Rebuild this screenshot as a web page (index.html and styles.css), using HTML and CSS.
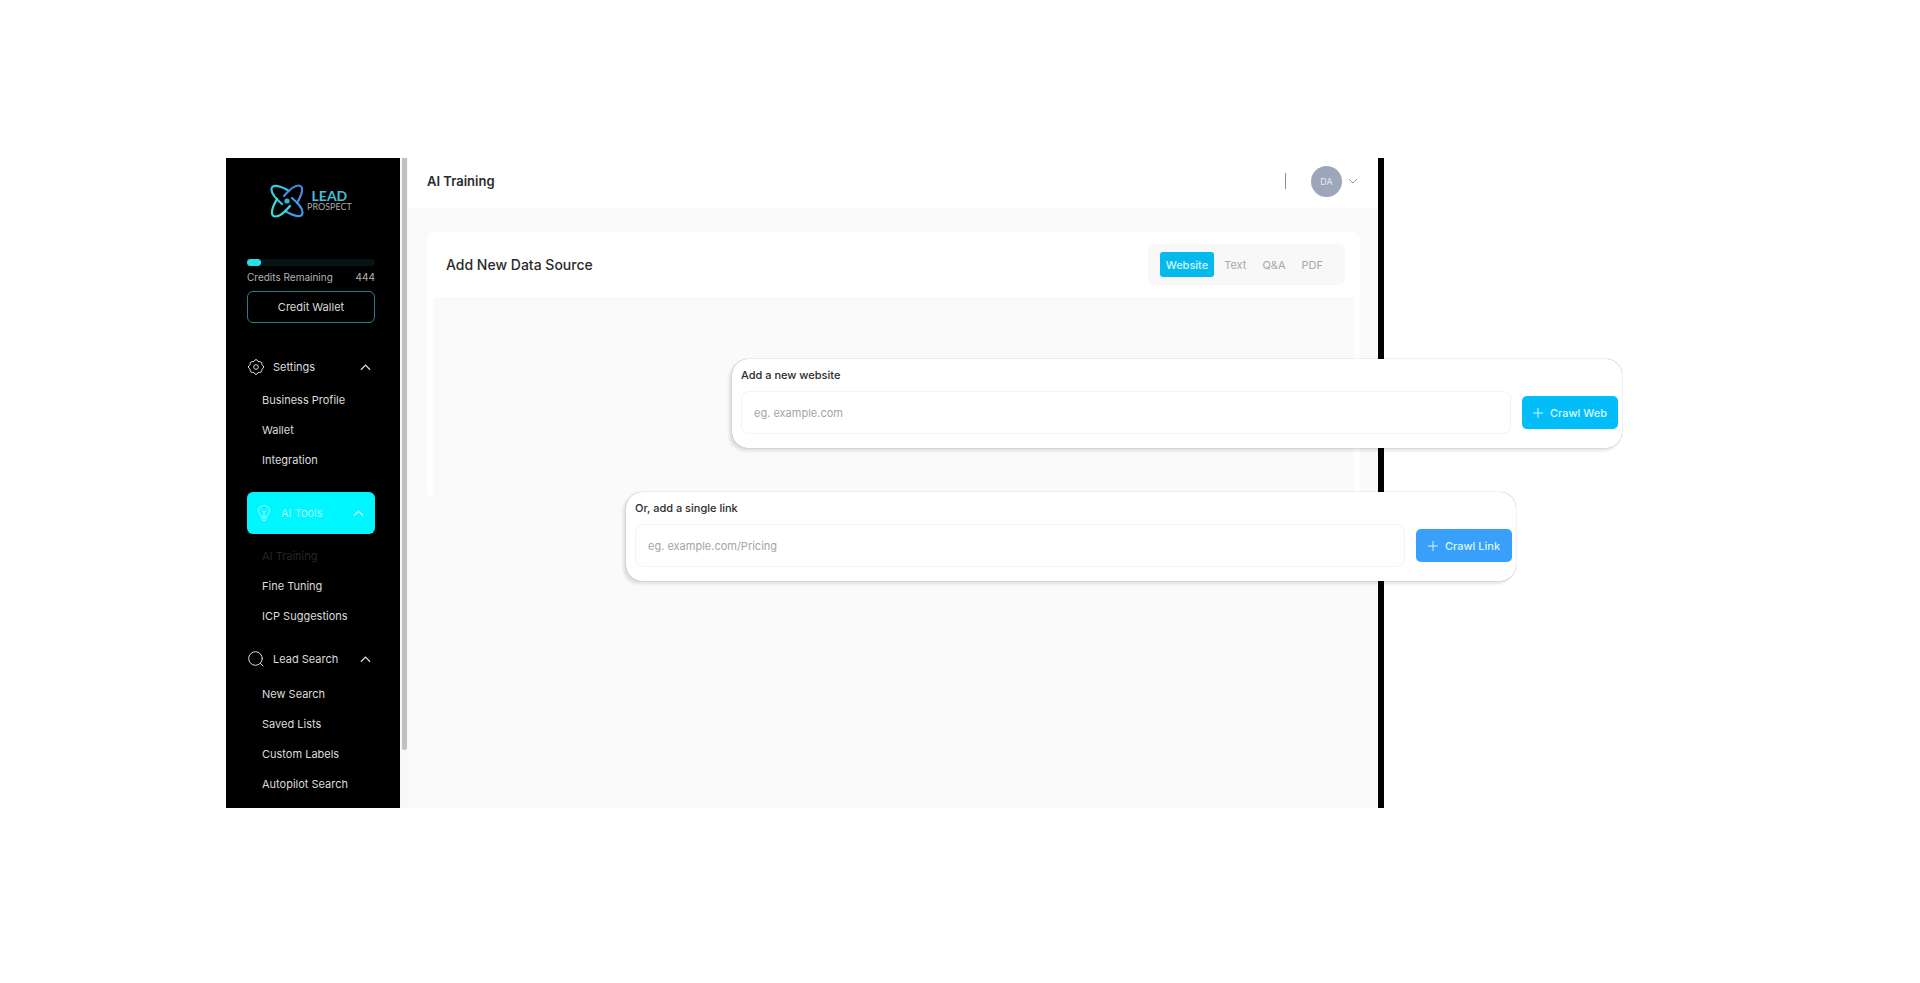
FILE: index.html
```html
<!DOCTYPE html>
<html lang="en">
<head>
    <meta charset="UTF-8">
    <meta name="viewport" content="width=device-width, initial-scale=1.0">
    <title>Lead Prospect - AI Training</title>
    <link rel="stylesheet" href="styles.css">
</head>
<body>
    <div class="app">
        <aside class="sidebar">
            <a class="logo" href="#">
                <svg class="logo-mark" viewBox="0 0 34 34" fill="none" stroke-width="2.2" stroke-linecap="round">
                    <path stroke="#35c8e4" d="M12 20C6 15 1.500 9 1.500 5.500 1.500 0.500 8 0.500 19 7"/>
                    <path stroke="#4a86e0" d="M12 20C6 15 1.500 9 1.500 5.500 1.500 0.500 8 0.500 19 7" transform="rotate(90 17 17)"/>
                    <path stroke="#3f9ce4" d="M12 20C6 15 1.500 9 1.500 5.500 1.500 0.500 8 0.500 19 7" transform="rotate(180 17 17)"/>
                    <path stroke="#35e0dc" d="M12 20C6 15 1.500 9 1.500 5.500 1.500 0.500 8 0.500 19 7" transform="rotate(270 17 17)"/>
                    <circle cx="17" cy="17" r="2.6" fill="#3cb0dc"/>
                </svg>
                <span class="logo-text">
                    <span class="logo-lead">LEAD</span>
                    <span class="logo-prospect">PROSPECT</span>
                </span>
            </a>

            <div class="credits">
                <div class="credits-bar"><div class="credits-fill"></div></div>
                <div class="credits-row"><span>Credits Remaining</span><span>444</span></div>
                <button class="wallet-button" type="button">Credit Wallet</button>
            </div>

            <nav class="menu">
                <button class="menu-header" type="button">
                    <svg class="menu-icon" viewBox="0 0 16 16" fill="none" stroke="currentColor" stroke-linejoin="round">
                        <path d="M6 2.500Q8-1.500 10 2.500 14.500 2.300 13.800 5.500 17.500 8 13.800 10.500 14.500 13.700 10 13.500 8 17.500 6 13.500 1.500 13.700 2.200 10.500-1.500 8 2.200 5.500 1.500 2.300 6 2.500z"/>
                        <circle cx="8" cy="8" r="2.300"/>
                    </svg>
                    <span>Settings</span>
                    <svg class="chevron" viewBox="0 0 12 8" fill="none" stroke="currentColor" stroke-width="1.4"><path d="M1 7l5-5 5 5"/></svg>
                </button>
                <ul class="menu-list">
                    <li><a href="#">Business Profile</a></li>
                    <li><a href="#">Wallet</a></li>
                    <li><a href="#">Integration</a></li>
                </ul>

                <button class="menu-header active" type="button">
                    <svg class="menu-icon" viewBox="0 0 16 16" fill="none" stroke="currentColor" stroke-linecap="round" stroke-linejoin="round">
                        <path d="M5.500 11.500C5.500 9.500 2.500 9 2.500 5.800a5.500 5.300 0 0 1 11 0c0 3.200-3 3.700-3 5.700zM5.800 13.700h4.400M6.800 15.500h2.400M8 11V7M5.800 5.300 8 7l2.200-1.700"/>
                    </svg>
                    <span>AI Tools</span>
                    <svg class="chevron" viewBox="0 0 12 8" fill="none" stroke="currentColor" stroke-width="1.8"><path d="M1 7l5-5 5 5"/></svg>
                </button>
                <ul class="menu-list">
                    <li><a class="current" href="#">AI Training</a></li>
                    <li><a href="#">Fine Tuning</a></li>
                    <li><a href="#">ICP Suggestions</a></li>
                </ul>

                <button class="menu-header" type="button">
                    <svg class="menu-icon" viewBox="0 0 16 16" fill="none" stroke="currentColor" stroke-linecap="round">
                        <circle cx="7.500" cy="7.500" r="6.800"/>
                        <path d="M12.500 12.500l2.500 2.500"/>
                    </svg>
                    <span>Lead Search</span>
                    <svg class="chevron" viewBox="0 0 12 8" fill="none" stroke="currentColor" stroke-width="1.4"><path d="M1 7l5-5 5 5"/></svg>
                </button>
                <ul class="menu-list">
                    <li><a href="#">New Search</a></li>
                    <li><a href="#">Saved Lists</a></li>
                    <li><a href="#">Custom Labels</a></li>
                    <li><a href="#">Autopilot Search</a></li>
                </ul>
            </nav>
        </aside>

        <div class="scroll-track"><div class="scroll-thumb"></div></div>

        <main class="main">
            <header class="topbar">
                <h1>AI Training</h1>
                <span class="divider"></span>
                <button class="account" type="button">
                    <span class="avatar">DA</span>
                    <svg class="account-chevron" viewBox="0 0 10 6" fill="none" stroke="currentColor"><path d="M1 1l4 4 4-4"/></svg>
                </button>
            </header>

            <section class="source-card">
                <div class="source-head">
                    <h2>Add New Data Source</h2>
                    <div class="tabs">
                        <button class="tab selected" type="button">Website</button>
                        <button class="tab" type="button">Text</button>
                        <button class="tab" type="button">Q&amp;A</button>
                        <button class="tab" type="button">PDF</button>
                    </div>
                </div>
                <div class="source-body"></div>
            </section>
        </main>

        <form class="crawl-card crawl-web">
            <label for="website">Add a new website</label>
            <div class="crawl-row">
                <input id="website" type="text" placeholder="eg. example.com">
                <button type="button">
                    <svg class="plus" viewBox="0 0 10 10" stroke="currentColor"><path d="M5 0v10M0 5h10"/></svg>
                    Crawl Web
                </button>
            </div>
        </form>

        <form class="crawl-card crawl-link">
            <label for="link">Or, add a single link</label>
            <div class="crawl-row">
                <input id="link" type="text" placeholder="eg. example.com/Pricing">
                <button type="button">
                    <svg class="plus" viewBox="0 0 10 10" stroke="currentColor"><path d="M5 0v10M0 5h10"/></svg>
                    Crawl Link
                </button>
            </div>
        </form>
    </div>
</body>
</html>
```
FILE: styles.css
```css
* {
    box-sizing: border-box;
}
body {
    margin: 0;
    padding: 158px 536px 0 226px;
    font-family: Inter, "Liberation Sans", sans-serif;
    font-size: 11px;
    background-color: #fff;
    color: #2b2b2b;
}
button, input {
    font-family: inherit;
    font-size: 11px;
}
button {
    padding: 0;
    border: none;
    background: none;
    cursor: pointer;
}
a {
    color: inherit;
    text-decoration: none;
}
.app {
    position: relative;
    display: grid;
    grid-template-columns: 174px 8px 1fr;
    border-right: 6px solid #000;
}

/* sidebar */
.sidebar {
    padding: 24px 25px 9px 21px;
    background-color: #000;
    color: #dcdcdc;
}
.logo {
    display: flex;
    align-items: center;
    gap: 3px;
    height: 38px;
    padding-left: 23px;
}
.logo-mark {
    width: 34px;
    height: 34px;
}
.logo-text {
    display: flex;
    flex-direction: column;
    align-items: center;
}
.logo-lead {
    font-family: Lato, sans-serif;
    font-size: 14px;
    font-weight: 700;
    line-height: 12px;
    color: #41bfd6;
}
.logo-prospect {
    font-family: Lato, sans-serif;
    font-size: 9px;
    line-height: 10px;
    color: #a8a8a8;
}
.credits {
    margin-top: 39px;
}
.credits-bar {
    height: 7px;
    border-radius: 4px;
    background-color: #071413;
}
.credits-fill {
    width: 11%;
    height: 100%;
    border-radius: 4px;
    background-color: #22e3ea;
}
.credits-row {
    display: flex;
    justify-content: space-between;
    margin: 4px 0 7px;
    font-size: 10px;
    line-height: 14px;
    color: #b4b4b4;
}
.wallet-button {
    width: 100%;
    height: 32px;
    border: 1px solid #2c7f80;
    border-radius: 6px;
    color: #dcdcdc;
}
.menu {
    margin-top: 28px;
}
.menu-header {
    display: flex;
    align-items: center;
    width: 100%;
    height: 32px;
    padding: 0 4px 0 1px;
    color: #dcdcdc;
}
.menu-icon {
    width: 16px;
    height: 16px;
    margin-right: 9px;
}
.chevron {
    width: 11px;
    height: 8px;
    margin-left: auto;
}
.menu-header.active {
    height: 42px;
    padding: 0 11px 0 9px;
    border-radius: 6px;
    background-color: #00f6ff;
    color: #a5fbff;
}
.menu-list {
    margin: 2px 0 17px;
    padding: 0 0 0 15px;
    list-style: none;
    line-height: 30px;
    white-space: nowrap;
}
.active + .menu-list {
    margin: 7px 0 12px;
}
.menu-list:last-child {
    margin: 4px 0 0;
}
.menu-list .current {
    color: #262626;
}
.scroll-track {
    padding-left: 2px;
    background-color: #f8f8f8;
}
.scroll-thumb {
    width: 5px;
    height: 91%;
    border-radius: 0 0 3px 3px;
    background-color: #c0c0c0;
}

/* main area */
.main {
    background-color: #fafafa;
}
.topbar {
    display: flex;
    align-items: center;
    height: 50px;
    padding: 0 20px 4px 19px;
    background-color: #fff;
}
h1, h2 {
    margin: 0;
    font-size: 13px;
    font-weight: 600;
}
.divider {
    width: 1px;
    height: 16px;
    margin: 0 25px 0 auto;
    background-color: #8c8c8c;
}
.account {
    display: flex;
    align-items: center;
    gap: 6px;
    color: #9a9a9a;
}
.avatar {
    width: 31px;
    border-radius: 50%;
    background-color: #9da6ba;
    color: #e4e8f0;
    font-size: 9px;
    line-height: 31px;
}
.account-chevron {
    width: 10px;
    height: 6px;
}
.source-card {
    margin: 24px 18px 0 19px;
    padding: 0 6px;
    border-radius: 8px;
    background-color: #fff;
}
.source-head {
    display: flex;
    align-items: center;
    justify-content: space-between;
    height: 65px;
    padding: 0 9px 0 13px;
}
h2 {
    font-size: 14px;
    font-weight: 500;
}
.tabs {
    display: flex;
    gap: 4px;
    padding: 8px 16px 8px 12px;
    border-radius: 6px;
    background-color: #f8f8f8;
}
.tab {
    height: 25px;
    padding: 0 6px;
    border-radius: 3px;
    color: #a8a8a8;
}
.tab.selected {
    background-color: #04b9ec;
    color: #d4f6ff;
    font-weight: 500;
}
.source-body {
    height: 202px;
    background-color: #fafafa;
}

/* floating crawl forms */
.crawl-card {
    position: absolute;
    padding: 7px 4px 14px 9px;
    border-radius: 16px;
    background-color: #fff;
    box-shadow: -3px 3px 3px rgba(0,0,0,0.1), 0 0 1px rgba(0,0,0,0.5);
}
.crawl-web {
    top: 201px;
    left: 506px;
    right: -244px;
}
.crawl-link {
    top: 334px;
    left: 400px;
    right: -138px;
}
.crawl-card label {
    display: block;
    font-weight: 500;
    line-height: 18px;
}
.crawl-row {
    display: flex;
    align-items: center;
    gap: 11px;
    margin-top: 7px;
}
.crawl-row input {
    flex: 1;
    height: 43px;
    padding: 0 12px;
    border: 1px solid #f3f3f3;
    border-radius: 8px;
    background-color: #fff;
}
.crawl-row input::placeholder {
    color: #a2a6a6;
}
.crawl-row button {
    display: flex;
    align-items: center;
    justify-content: center;
    gap: 7px;
    width: 96px;
    height: 33px;
    border-radius: 5px;
    background-color: #02bdf8;
    color: #d8f7ff;
    font-weight: 500;
}
.crawl-link .crawl-row button {
    background-color: #38a0fb;
}
.plus {
    width: 10px;
    height: 10px;
}
```
